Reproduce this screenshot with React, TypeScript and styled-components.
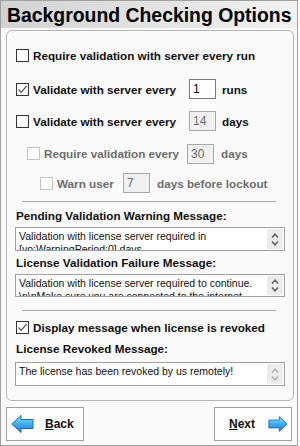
import React from "react";
import styled, { createGlobalStyle } from "styled-components";

const GlobalStyle = createGlobalStyle`
  body {
    margin: 0;
    background: #fafafa;
    font-family: "Liberation Sans", Arial, sans-serif;
  }
`;

const Frame = styled.div`
  box-sizing: border-box;
  width: 298px;
  height: 446px;
  border: 1px solid #a0a0a0;
  background: #fafafa;
  display: flex;
  flex-direction: column;
`;

const Header = styled.div`
  height: 27px;
  padding: 2px 0 0 6px;
  box-sizing: border-box;
  background: linear-gradient(to right, #d2d2d2, #f2f2f2);
  font-size: 19.4px;
  font-weight: bold;
  color: #000;
  line-height: 25px;
  white-space: nowrap;
`;

const GroupBox = styled.div`
  flex: 1;
  margin: 2px 3px 0 5px;
  border: 1px solid #b4b4b4;
  border-radius: 6px;
  padding: 8px 8px 0 8px;
  display: flex;
  flex-direction: column;
`;

const Row = styled.div<{ $h: number; $indent?: number; $top?: number }>`
  display: flex;
  align-items: center;
  height: ${(p) => p.$h}px;
  margin-top: ${(p) => p.$top ?? 0}px;
  padding-left: ${(p) => 1 + (p.$indent ?? 0)}px;
  flex-shrink: 0;
`;

const Box = styled.span<{ $disabled?: boolean }>`
  box-sizing: border-box;
  width: 13px;
  height: 13px;
  border: 1px solid ${(p) => (p.$disabled ? "#c4c4c4" : "#333")};
  background: #fff;
  margin-right: 4px;
  display: flex;
  align-items: center;
  justify-content: center;
  flex-shrink: 0;
`;

const Text = styled.span<{ $disabled?: boolean; $w?: number }>`
  font-size: 11.7px;
  font-weight: bold;
  color: ${(p) => (p.$disabled ? "#6d6d6d" : "#111")};
  white-space: nowrap;
  ${(p) => (p.$w ? `width: ${p.$w}px;` : "")}
  flex-shrink: 0;
`;

const NumBox = styled.span<{ $disabled?: boolean; $gap: number }>`
  box-sizing: border-box;
  width: 27px;
  height: 20px;
  border: 1px solid ${(p) => (p.$disabled ? "#a8a8a8" : "#7a7a7a")};
  background: ${(p) => (p.$disabled ? "#f0f0f0" : "#fff")};
  color: ${(p) => (p.$disabled ? "#6d6d6d" : "#000")};
  font-size: 12px;
  line-height: 18px;
  padding-left: 3px;
  margin-right: ${(p) => p.$gap}px;
  flex-shrink: 0;
`;

const Separator = styled.div<{ $top: number }>`
  height: 1px;
  background: #a8a8a8;
  margin: ${(p) => p.$top}px 9px 0 7px;
  flex-shrink: 0;
`;

const Caption = styled.div<{ $h: number; $pad?: number }>`
  height: ${(p) => p.$h}px;
  box-sizing: border-box;
  padding-top: ${(p) => p.$pad ?? 0}px;
  padding-left: 1px;
  display: flex;
  align-items: center;
  font-size: 11.7px;
  font-weight: bold;
  color: #111;
  flex-shrink: 0;
`;

const Memo = styled.div<{ $h: number; $top?: number }>`
  box-sizing: border-box;
  height: ${(p) => p.$h}px;
  margin-top: ${(p) => p.$top ?? 0}px;
  border: 1px solid #a0a0a0;
  background: #fff;
  display: flex;
  overflow: hidden;
  flex-shrink: 0;
`;

const MemoText = styled.div`
  flex: 1;
  padding: 2px 0 0 3px;
  font-size: 10.5px;
  line-height: 13px;
  color: #111;
  overflow: hidden;
`;

const ScrollCol = styled.div`
  width: 16px;
  margin: 1px 1px 1px 0;
  background: #ececec;
  display: flex;
  flex-direction: column;
  align-items: center;
  justify-content: center;
  gap: 3px;
`;

const Footer = styled.div`
  height: 44px;
  box-sizing: border-box;
  padding: 6px 5px 4px 5px;
  display: flex;
  justify-content: space-between;
`;

const NavButton = styled.div<{ $next?: boolean }>`
  box-sizing: border-box;
  width: 78px;
  height: 34px;
  border: 1px solid #a0a0a0;
  background: #fdfdfd;
  display: flex;
  align-items: center;
  padding: ${(p) => (p.$next ? "0 3px 0 14px" : "0 0 0 4px")};
  gap: ${(p) => (p.$next ? "13px" : "11px")};
  font-size: 12px;
  font-weight: bold;
  color: #111;
  u {
    text-decoration: underline;
  }
`;

const Check = () => (
  <svg width="11" height="11" viewBox="0 0 11 11">
    <path d="M1.5 5.5 L4.2 8.4 L9.6 2" fill="none" stroke="#555" strokeWidth="1.2" />
  </svg>
);

const CheckBox = ({ checked, disabled }: { checked?: boolean; disabled?: boolean }) => (
  <Box $disabled={disabled}>{checked && <Check />}</Box>
);

const Chevrons = ({ dim }: { dim?: boolean }) => {
  const c = dim ? "#b4b4b4" : "#606060";
  return (
    <>
      <svg width="8" height="5" viewBox="0 0 8 5">
        <path d="M1 4.5 L4 1.2 L7 4.5" fill="none" stroke={c} strokeWidth="1.5" />
      </svg>
      <svg width="8" height="5" viewBox="0 0 8 5">
        <path d="M1 0.5 L4 3.8 L7 0.5" fill="none" stroke={c} strokeWidth="1.5" />
      </svg>
    </>
  );
};

const Arrow = ({ right }: { right?: boolean }) => (
  <svg width="23" height="20" viewBox="0 0 23 20" style={right ? { transform: "scaleX(-1)" } : undefined}>
    <defs>
      <linearGradient id={right ? "ag-r" : "ag-l"} x1="0" y1="0" x2="0" y2="1">
        <stop offset="0" stopColor="#9fe2ff" />
        <stop offset="0.45" stopColor="#44b4f2" />
        <stop offset="1" stopColor="#1a78d2" />
      </linearGradient>
    </defs>
    <path
      d="M1 10 L10 1.5 L10 5.5 L22 5.5 L22 14.5 L10 14.5 L10 18.5 Z"
      fill={`url(#${right ? "ag-r" : "ag-l"})`}
      stroke="#1b68bb"
      strokeWidth="1"
      strokeLinejoin="round"
    />
  </svg>
);

export default function App() {
  return (
    <>
      <GlobalStyle />
      <Frame>
        <Header>Background Checking Options</Header>
        <GroupBox>
          <Row $h={33}>
            <CheckBox />
            <Text>Require validation with server every run</Text>
          </Row>
          <Row $h={34}>
            <CheckBox checked />
            <Text $w={156}>Validate with server every</Text>
            <NumBox $gap={6}>1</NumBox>
            <Text>runs</Text>
          </Row>
          <Row $h={30}>
            <CheckBox />
            <Text $w={156}>Validate with server every</Text>
            <NumBox $gap={6} $disabled>14</NumBox>
            <Text>days</Text>
          </Row>
          <Row $h={35} $indent={11}>
            <CheckBox disabled />
            <Text $w={143} $disabled>Require validation every</Text>
            <NumBox $gap={7} $disabled>30</NumBox>
            <Text $disabled>days</Text>
          </Row>
          <Row $h={24} $indent={24}>
            <CheckBox disabled />
            <Text $w={66} $disabled>Warn user</Text>
            <NumBox $gap={7} $disabled>7</NumBox>
            <Text $disabled>days before lockout</Text>
          </Row>
          <Separator $top={6} />
          <Caption $h={25} $pad={2}>Pending Validation Warning Message:</Caption>
          <Memo $h={24}>
            <MemoText>
              Validation with license server required in
              <br />
              [yo:WarningPeriod:0] days
            </MemoText>
            <ScrollCol>
              <Chevrons />
            </ScrollCol>
          </Memo>
          <Caption $h={23}>License Validation Failure Message:</Caption>
          <Memo $h={23}>
            <MemoText>
              Validation with license server required to continue.
              <br />
              \n\nMake sure you are connected to the internet
            </MemoText>
            <ScrollCol>
              <Chevrons />
            </ScrollCol>
          </Memo>
          <Separator $top={13} />
          <Row $h={23} $top={5}>
            <CheckBox checked />
            <Text>Display message when license is revoked</Text>
          </Row>
          <Caption $h={18}>License Revoked Message:</Caption>
          <Memo $h={24} $top={5}>
            <MemoText>The license has been revoked by us remotely!</MemoText>
            <ScrollCol>
              <Chevrons dim />
            </ScrollCol>
          </Memo>
        </GroupBox>
        <Footer>
          <NavButton>
            <Arrow />
            <span>
              <u>B</u>ack
            </span>
          </NavButton>
          <NavButton $next>
            <span>
              <u>N</u>ext
            </span>
            <Arrow right />
          </NavButton>
        </Footer>
      </Frame>
    </>
  );
}
